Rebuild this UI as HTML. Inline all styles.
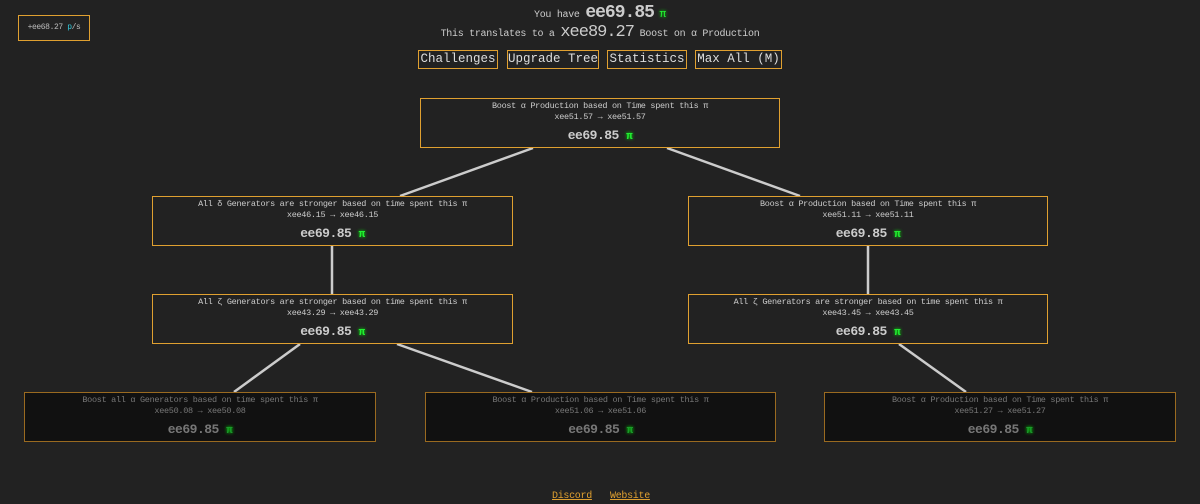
<!DOCTYPE html>
<html><head><style>
body{margin:0;width:1200px;height:504px;background:#222;overflow:hidden;font-family:"Liberation Mono",monospace;color:#ccc;position:relative}
.a{position:absolute}
.box{position:absolute;border:1px solid #e0a030;box-sizing:border-box;text-align:center;background:#222}
.box .t{font-size:8.5px;line-height:11px;margin-top:2px;letter-spacing:-0.3px}
.box .n{font-size:13px;font-weight:bold;margin-top:5px;letter-spacing:-0.5px}
.pi{color:#22ee33;font-size:11px;text-shadow:0 0 3px #0f0}
.d{background:#111;color:#777}
.d .pi{color:#1a9a2a}
.btn{position:absolute;top:50px;height:19px;border:1px solid #e0a030;box-sizing:border-box;font-size:12.5px;line-height:17px;text-align:center;color:#ddd;white-space:nowrap;overflow:hidden}
</style></head><body>
<div class="a" style="left:18px;top:15px;width:72px;height:26px;border:1px solid #e0a030;box-sizing:border-box;font-size:8px;line-height:24px;text-align:center;color:#bbb;letter-spacing:-0.4px">+ee68.27 <span style="color:#3cd">p</span>/s</div>
<div class="a" style="left:0;width:1200px;top:3px;text-align:center;font-size:10px;letter-spacing:-0.3px">You have <span style="font-size:18px;font-weight:bold;letter-spacing:-1px">ee69.85</span> <span class="pi">π</span></div>
<div class="a" style="left:0;width:1200px;top:23px;text-align:center;font-size:10px;letter-spacing:-0.3px">This translates to a <span style="font-size:17px;letter-spacing:-1px">xee89.27</span> Boost on α Production</div>
<div class="btn" style="left:418px;width:80px">Challenges</div>
<div class="btn" style="left:507px;width:92px">Upgrade Tree</div>
<div class="btn" style="left:607px;width:80px">Statistics</div>
<div class="btn" style="left:695px;width:87px">Max All (M)</div>
<svg class="a" style="left:0;top:0" width="1200" height="504"><g stroke="#ccc" stroke-width="2.5">
<line x1="533" y1="148" x2="400" y2="196"/><line x1="667" y1="148" x2="800" y2="196"/>
<line x1="332" y1="245" x2="332" y2="294"/><line x1="868" y1="245" x2="868" y2="294"/>
<line x1="300" y1="344" x2="234" y2="392"/><line x1="397" y1="344" x2="532" y2="392"/>
<line x1="899" y1="344" x2="966" y2="392"/></g></svg>
<div class="box" style="left:420px;top:98px;width:360px;height:50px"><div class="t">Boost α Production based on Time spent this π<br>xee51.57 → xee51.57</div><div class="n">ee69.85 <span class="pi">π</span></div></div>
<div class="box" style="left:152px;top:196px;width:361px;height:50px"><div class="t">All δ Generators are stronger based on time spent this π<br>xee46.15 → xee46.15</div><div class="n">ee69.85 <span class="pi">π</span></div></div>
<div class="box" style="left:688px;top:196px;width:360px;height:50px"><div class="t">Boost α Production based on Time spent this π<br>xee51.11 → xee51.11</div><div class="n">ee69.85 <span class="pi">π</span></div></div>
<div class="box" style="left:152px;top:294px;width:361px;height:50px"><div class="t">All ζ Generators are stronger based on time spent this π<br>xee43.29 → xee43.29</div><div class="n">ee69.85 <span class="pi">π</span></div></div>
<div class="box" style="left:688px;top:294px;width:360px;height:50px"><div class="t">All ζ Generators are stronger based on time spent this π<br>xee43.45 → xee43.45</div><div class="n">ee69.85 <span class="pi">π</span></div></div>
<div class="box d" style="left:24px;top:392px;width:352px;height:50px;border-color:#9a6a20"><div class="t">Boost all α Generators based on time spent this π<br>xee50.08 → xee50.08</div><div class="n">ee69.85 <span class="pi">π</span></div></div>
<div class="box d" style="left:425px;top:392px;width:351px;height:50px;border-color:#9a6a20"><div class="t">Boost α Production based on Time spent this π<br>xee51.06 → xee51.06</div><div class="n">ee69.85 <span class="pi">π</span></div></div>
<div class="box d" style="left:824px;top:392px;width:352px;height:50px;border-color:#9a6a20"><div class="t">Boost α Production based on Time spent this π<br>xee51.27 → xee51.27</div><div class="n">ee69.85 <span class="pi">π</span></div></div>
<div class="a" style="left:552px;top:491px;font-size:10px;color:#e0a030;text-decoration:underline;letter-spacing:-0.3px">Discord</div>
<div class="a" style="left:610px;top:491px;font-size:10px;color:#e0a030;text-decoration:underline;letter-spacing:-0.3px">Website</div>
</body></html>
